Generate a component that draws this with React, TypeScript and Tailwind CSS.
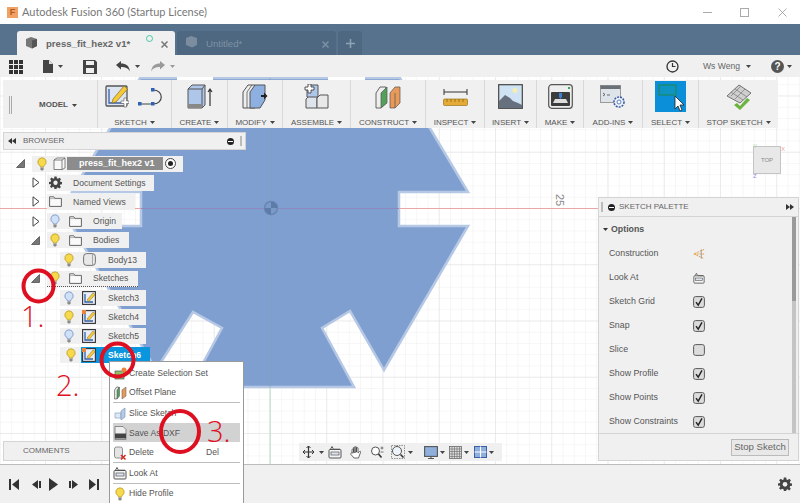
import React from "react";

const Caret = ({ className = "", color = "#444" }: { className?: string; color?: string }) => (
  <svg width="5" height="3" viewBox="0 0 5 3" className={`shrink-0 ${className}`}>
    <path d="M0 0h5L2.500 3z" fill={color} />
  </svg>
);

const Bulb = ({ blue = false }: { blue?: boolean }) => (
  <svg width="10" height="14" viewBox="0 0 10 14">
    <path
      d="M5 .8a4.2 4.2 0 0 0-2.4 7.6c.6.5.8 1 .8 1.6h3.2c0-.6.2-1.1.8-1.6A4.2 4.2 0 0 0 5 .8z"
      fill={blue ? "#cfe0f7" : "#f7d94c"}
      stroke={blue ? "#6f8fc4" : "#b99a2a"}
      strokeWidth=".8"
    />
    <path d="M3.4 10.6h3.2v2.2l-1 .7h-1.2l-1-.7z" fill="#8a8a8a" />
  </svg>
);

const Folder = () => (
  <svg width="13" height="11" viewBox="0 0 13 11">
    <path d="M.6 10.4V.8h4.2l1 1.6h6.6v8z" fill="#fafafa" stroke="#555" strokeWidth=".9" />
    <path d="M.6 2.6h12.8" stroke="#888" strokeWidth=".6" />
  </svg>
);

const Gear = ({ size = 13 }: { size?: number }) => (
  <svg width={size} height={size} viewBox="0 0 24 24">
    <path
      d="M10 1h4l.6 3.2 2 .8L19.4 3l2.8 2.8-2 2.8.8 2L24 11v4l-3.2.6-.8 2 2 2.6-2.8 2.8-2.8-2-2 .8L14 24h-4l-.6-3.2-2-.8-2.8 2-2.8-2.8 2-2.6-.8-2L0 15v-4l3.2-.6.8-2-2-2.8L4.8 2.8 7.6 5l2-.8z"
      fill="#444"
    />
    <circle cx="12" cy="12.5" r="4" fill="#f0f0f0" />
  </svg>
);

const Tri = ({ open }: { open: boolean }) =>
  open ? (
    <svg width="9" height="9" viewBox="0 0 9 9">
      <path d="M.5 8.5L8.5.5v8z" fill="#777" stroke="#444" strokeWidth=".7" />
    </svg>
  ) : (
    <svg width="8" height="11" viewBox="0 0 8 11">
      <path d="M1 .8l6 4.7-6 4.7z" fill="#fff" stroke="#444" strokeWidth="1" />
    </svg>
  );

const SketchIcon = ({ dot = false }: { dot?: boolean }) => (
  <svg width="14" height="14" viewBox="0 0 14 14">
    <rect x=".6" y=".6" width="12.8" height="12.8" fill="#e8eefa" stroke="#333" strokeWidth="1.1" />
    <path d="M3 3v8h8" fill="none" stroke="#3560a8" strokeWidth="1.3" />
    <path d="M5 9l6-7 2 1.6-6 7z" fill="#f4c93a" stroke="#8a6d14" strokeWidth=".5" />
    {dot && <rect x="0" y="0" width="4" height="4" fill="#e8853a" />}
  </svg>
);

const Check = ({ on = true }: { on?: boolean }) => (
  <svg width="12" height="12" viewBox="0 0 12 12">
    <rect x=".6" y=".6" width="10.8" height="10.8" rx="2" fill="#dcdcdc" stroke="#5a5a5a" strokeWidth="1" />
    {on && <path d="M3 6.2l2.2 3L9 2.4" fill="none" stroke="#222" strokeWidth="1.4" />}
  </svg>
);

const LookAt = ({ w = 14 }: { w?: number }) => (
  <svg width={w} height={w} viewBox="0 0 14 14">
    <rect x="1" y="4.5" width="12" height="8.5" rx="1" fill="#f5f5f5" stroke="#555" strokeWidth="1" />
    <rect x="3" y="7" width="8" height="3" fill="#dfe6f2" stroke="#555" strokeWidth=".7" />
    <path d="M2.5 4.2L4 1.5l1.5 2.7M6 4.2h6" fill="none" stroke="#555" strokeWidth="1" />
  </svg>
);

// ribbon drawings
const RibbonSketch = () => (
  <div className="flex items-center gap-[9px]">
    <svg width="24" height="25" viewBox="0 0 24 25">
      <rect x="1" y="2" width="21" height="20" rx="1" fill="#dde5f3" stroke="#555" strokeWidth="1.3" />
      <path d="M4 5v14h15" fill="none" stroke="#3c5fa5" strokeWidth="1.3" />
      <path d="M8 15L19 2l3.5 3L11 18l-4 1z" fill="#f4c93a" stroke="#8a6d14" strokeWidth=".7" />
      <path d="M16 17h3v-3h2.5v3H24v2.5h-2.5V23H19v-3.500h-3z" fill="#fff" stroke="#666" strokeWidth=".7" />
    </svg>
    <svg width="26" height="20" viewBox="0 0 26 20">
      <path d="M2 17h13c11 0 11-14 0-14" fill="none" stroke="#444" strokeWidth="1.2" />
      <rect x="0" y="15" width="3.500" height="3.500" fill="#2f62b5" />
      <rect x="13" y="15" width="3.500" height="3.500" fill="#2f62b5" />
      <rect x="13" y="1" width="3.500" height="3.500" fill="#2f62b5" />
    </svg>
  </div>
);

const RibbonCreate = () => (
  <svg width="26" height="26" viewBox="0 0 26 26">
    <path d="M1 5l4-4h13v20l-3 3H1z" fill="#aec6ea" stroke="#555" strokeWidth="1" />
    <path d="M1 5h14v19M15 5l3-4" fill="none" stroke="#555" strokeWidth="1" />
    <path d="M1 20h14v4H1z" fill="#888" />
    <path d="M23 22V6M21 8l2-3 2 3" fill="none" stroke="#333" strokeWidth="1.2" />
  </svg>
);

const RibbonModify = () => (
  <svg width="26" height="26" viewBox="0 0 26 26">
    <path d="M1 8l5-7h7v23H1z" fill="#eee" stroke="#555" strokeWidth="1" />
    <path d="M8 24V8l5-7h10v15l-5 8z" fill="#8eb0e0" stroke="#555" strokeWidth="1" />
    <path d="M5 24V8l5-7" fill="none" stroke="#555" strokeWidth=".8" />
    <path d="M19 11h3V8.500l3.500 3.500-3.500 3.500V13h-3z" fill="#222" />
  </svg>
);

const RibbonAssemble = () => (
  <svg width="25" height="25" viewBox="0 0 25 25">
    <path d="M2 24v-9l3-3h8v12z" fill="#dfe3ea" stroke="#555" strokeWidth="1" />
    <path d="M13 24V14l3-3h8v13z" fill="#e8e8e8" stroke="#555" strokeWidth="1" />
    <path d="M3 13V4l3-3h8v12z" fill="#aec6ea" stroke="#555" strokeWidth="1" />
    <path d="M1 3h3V0h3v3h3v3H7v3H4V6H1z" fill="#fff" stroke="#444" strokeWidth=".9" />
  </svg>
);

const RibbonConstruct = () => (
  <svg width="27" height="24" viewBox="0 0 27 24">
    <path d="M1 8l4-6h6v16l-5 5H1z" fill="#eee" stroke="#555" strokeWidth=".9" />
    <path d="M6 23V8l6-6v16z" fill="#52a05a" stroke="#555" strokeWidth=".7" />
    <path d="M15 23V8l5-6h5v16l-5 5z" fill="#e89a5a" stroke="#555" strokeWidth=".7" />
    <path d="M20 23V8" stroke="#555" strokeWidth=".7" />
  </svg>
);

const RibbonInspect = () => (
  <svg width="25" height="20" viewBox="0 0 25 20">
    <path d="M1 2v6M24 2v6M1 5h23" fill="none" stroke="#333" strokeWidth="1" />
    <rect x="0.500" y="12" width="24" height="6.500" rx="1" fill="#e6ab36" stroke="#9a7620" strokeWidth=".7" />
    <path d="M4 12v3M8 12v3M12 12v3M16 12v3M20 12v3" stroke="#7a5c14" strokeWidth=".7" />
  </svg>
);

const RibbonInsert = () => (
  <svg width="25" height="25" viewBox="0 0 25 25">
    <rect x=".7" y=".7" width="23.600" height="23.600" fill="#cfe3f4" stroke="#444" strokeWidth="1.2" />
    <circle cx="17" cy="6.500" r="2.500" fill="#f6eeb0" />
    <path d="M1 24V17l6-6 5 3 3 3 5 2 4 2v3z" fill="#66707e" />
  </svg>
);

const RibbonMake = () => (
  <svg width="25" height="25" viewBox="0 0 25 25">
    <rect x=".7" y=".7" width="23.600" height="23.600" rx="3" fill="#eee" stroke="#555" strokeWidth="1.2" />
    <rect x="3" y="8" width="19" height="14" rx="1" fill="#3c3c3c" />
    <path d="M5 19l2-4h11l2 4z" fill="#ddd" />
    <path d="M11 9h3v4l-1.500 2-1.500-2z" fill="#3f7fd6" />
    <rect x="20" y="3" width="2" height="2" fill="#3aa55a" />
  </svg>
);

const RibbonAddins = () => (
  <svg width="26" height="24" viewBox="0 0 26 24">
    <rect x=".5" y=".5" width="20" height="17" fill="#dfe3ea" stroke="#888" strokeWidth=".8" />
    <rect x=".5" y=".5" width="20" height="3.500" fill="#6a7078" />
    <path d="M3 8l2 1.500L3 11M7 10h3" fill="none" stroke="#333" strokeWidth=".7" />
    <circle cx="19" cy="17" r="5" fill="#eef2fa" stroke="#3c5fa5" strokeWidth="1.600" strokeDasharray="2 1" />
    <circle cx="19" cy="17" r="2" fill="#fff" stroke="#3c5fa5" strokeWidth=".8" />
  </svg>
);

const RibbonSelect = () => (
  <div className="flex h-[31px] w-[31px] items-start bg-[#0a8fd8]">
    <svg width="31" height="31" viewBox="0 0 31 31">
      <rect x="4" y="4" width="17" height="10" fill="#1a9e9a" fillOpacity=".35" stroke="#1b8a72" strokeWidth="1.400" />
      <path d="M20 15v13l3-3 2 5 2-1-2-5h4z" fill="#fff" stroke="#222" strokeWidth=".8" />
    </svg>
  </div>
);

const RibbonStop = () => (
  <svg width="26" height="26" viewBox="0 0 26 26">
    <path d="M1 12L13 1l12 8-11 10z" fill="#cfcfcf" stroke="#666" strokeWidth=".9" />
    <path d="M5 8l12 8M9 5l12 8M9 15L19 5M5 12L15 2" stroke="#777" strokeWidth=".7" />
    <path d="M11 19l3 3 7-8 3 2-10 10-6-5z" fill="#6cb33f" />
  </svg>
);

const groups: { label: string; w: string; icon: React.ReactNode }[] = [
  { label: "SKETCH", w: "w-[74px]", icon: <RibbonSketch /> },
  { label: "CREATE", w: "w-[56px]", icon: <RibbonCreate /> },
  { label: "MODIFY", w: "w-[55px]", icon: <RibbonModify /> },
  { label: "ASSEMBLE", w: "w-[68px]", icon: <RibbonAssemble /> },
  { label: "CONSTRUCT", w: "w-[75px]", icon: <RibbonConstruct /> },
  { label: "INSPECT", w: "w-[59px]", icon: <RibbonInspect /> },
  { label: "INSERT", w: "w-[52px]", icon: <RibbonInsert /> },
  { label: "MAKE", w: "w-[47px]", icon: <RibbonMake /> },
  { label: "ADD-INS", w: "w-[59px]", icon: <RibbonAddins /> },
  { label: "SELECT", w: "w-[56px]", icon: <RibbonSelect /> },
  { label: "STOP SKETCH", w: "w-[79px]", icon: <RibbonStop /> },
];

const Ribbon = () => (
  <div className="absolute left-[3px] top-[3px] flex h-[48px] w-[775px] bg-[#f0f0f0] text-[#555]">
    <div className="flex h-full w-[95px] items-center border-r border-[#d8d8d8] pl-[6px] pt-[2px]">
      <div className="h-[18px] w-[3px] border-x border-[#aaa]" />
      <span className="ml-[27px] text-[8px] font-bold">MODEL</span>
      <Caret className="ml-[4px]" />
    </div>
    {groups.map((g, i) => (
      <div
        key={g.label}
        className={`flex h-full flex-col items-center justify-between ${g.w} ${i < groups.length - 1 ? "border-r border-[#d8d8d8]" : ""}`}
      >
        <div className="flex h-[33px] items-center">{g.icon}</div>
        <div className="flex h-[11px] items-center gap-[3px] text-[8px] leading-[10px]">
          {g.label}
          <Caret />
        </div>
      </div>
    ))}
  </div>
);

const Sheet = () => (
  <svg className="absolute inset-0" width="800" height="387" viewBox="0 77 800 387">
    <defs>
      <pattern id="minor" x="270" y="208" width="11.25" height="11.25" patternUnits="userSpaceOnUse">
        <path d="M0 0h11.25M0 0v11.25" stroke="#efefef" strokeWidth="1" fill="none" />
      </pattern>
      <pattern id="major" x="270" y="208" width="56.25" height="56.25" patternUnits="userSpaceOnUse">
        <path d="M0 0h56.25M0 0v56.25" stroke="#e0e0e0" strokeWidth="1" fill="none" />
      </pattern>
    </defs>
    <rect x="0" y="77" width="800" height="387" fill="#fff" />
    <rect x="0" y="77" width="800" height="387" fill="url(#minor)" />
    <rect x="0" y="77" width="800" height="387" fill="url(#major)" />
    <path d="M270 77v387" stroke="#b9dcc4" strokeWidth="1" />
    <polygon
      points="140,78 400,78 468,192 399,192 399,226 468,226 384,370 350,311 322,328 354,387 190,387 222,328 193,312 156,370 72,226 141,226 141,192 72,192"
      fill="#7f9fd0"
      stroke="#b6c8e4"
      strokeWidth="2.500"
    />
    <rect x="177" y="77" width="36" height="4" fill="#fff" />
    <rect x="328" y="77" width="37" height="4" fill="#fff" />
    <path d="M0 208.500h141M399 208.500h200" stroke="#eba6a6" strokeWidth="1.200" />
    <path d="M141 208.500h258" stroke="#8d88bd" strokeWidth="1" />
    <path d="M270 78v309" stroke="#7ba3b8" strokeWidth=".8" />
    <circle cx="271" cy="208" r="6.500" fill="#7c9ac8" stroke="#6786b4" strokeWidth="1.500" />
    <path d="M271 208V201.500A6.500 6.500 0 0 1 277.500 208zM271 208v6.500a6.500 6.500 0 0 1-6.500-6.500z" fill="#5f7ca8" />
  </svg>
);

const Strip = ({ w, children, className = "" }: { w: string; children: React.ReactNode; className?: string }) => (
  <div className={`flex h-4 items-center bg-[#f0f0f0] ${w} ${className}`}>{children}</div>
);

const Label = ({ children, ml }: { children: React.ReactNode; ml: string }) => (
  <div className={`whitespace-nowrap text-[8.6px] leading-3 text-[#555] ${ml}`}>{children}</div>
);

const Slot = ({ w, open }: { w: string; open?: boolean }) => (
  <div className={`flex h-full shrink-0 items-center justify-end pr-[7px] ${w}`}>
    {open !== undefined && <Tri open={open} />}
  </div>
);

const Row = ({ children }: { children: React.ReactNode }) => (
  <div className="flex h-[19.2px] items-center">{children}</div>
);

const Box = ({ w, children }: { w: string; children: React.ReactNode }) => (
  <div className={`flex shrink-0 justify-center ${w}`}>{children}</div>
);

const FolderRow = ({ label, w, open, blue, dotted }: { label: string; w: string; open: boolean; blue?: boolean; dotted?: boolean }) => (
  <Row>
    <Slot w="w-[47px]" open={open} />
    <Strip w={w} className={dotted ? "border-b border-dotted border-[#555]" : ""}>
      <Box w="w-[16px]"><Bulb blue={blue} /></Box>
      <Box w="w-[24px]"><Folder /></Box>
      <Label ml="ml-[6px]">{label}</Label>
    </Strip>
  </Row>
);

const ChildRow = ({ label, blue, icon }: { label: string; blue?: boolean; icon: React.ReactNode }) => (
  <Row>
    <Slot w="w-[60px]" />
    <Strip w="w-[86px]">
      <Box w="w-[18px]"><Bulb blue={blue} /></Box>
      <Box w="w-[22px]">{icon}</Box>
      <Label ml="ml-[8px]">{label}</Label>
    </Strip>
  </Row>
);

const Browser = () => (
  <div className="absolute left-0 top-[55px] w-[246px]">
    <div className="ml-[3px] flex h-[18px] items-center border border-[#d4d4d4] bg-[#f0f0f0] text-[8px] text-[#666]">
      <svg width="8" height="6" viewBox="0 0 8 6" className="ml-[4px]">
        <path d="M4 0v6L0 3zM8 0v6L4 3z" fill="#333" />
      </svg>
      <span className="ml-[7px]">BROWSER</span>
      <div className="ml-auto flex h-[7px] w-[7px] items-center justify-center rounded-full bg-[#222]">
        <div className="h-px w-[5px] bg-white" />
      </div>
      <div className="ml-[6px] mr-[3px] h-[10px] w-[2px] border-x border-[#bbb]" />
    </div>
    <div className="mt-1">
      <Row>
        <Slot w="w-[32px]" open />
        <Strip w="w-[151px]">
          <Box w="w-[20px]"><Bulb /></Box>
          <div className="flex h-[13px] w-[111px] items-center bg-[#8c8c8c]">
            <svg width="15" height="13" viewBox="0 0 15 13" className="bg-[#eee]">
              <path d="M2 3l3-2h8v10l-3 1.500H2z" fill="#f8f8f8" stroke="#666" strokeWidth=".8" />
              <path d="M10 3v9.500M2 3h8l3-2" fill="none" stroke="#666" strokeWidth=".8" />
            </svg>
            <span className="ml-[12px] whitespace-nowrap text-[9px] font-bold text-white">press_fit_hex2 v1</span>
          </div>
          <div className="ml-[2px] flex h-[11px] w-[11px] items-center justify-center rounded-full border border-[#444] bg-white">
            <div className="h-[5px] w-[5px] rounded-full bg-[#222]" />
          </div>
        </Strip>
      </Row>
      <Row>
        <Slot w="w-[47px]" open={false} />
        <Strip w="w-[107px]">
          <Box w="w-[16px]"><Gear /></Box>
          <Label ml="ml-[10px]">Document Settings</Label>
        </Strip>
      </Row>
      <Row>
        <Slot w="w-[47px]" open={false} />
        <Strip w="w-[88px]">
          <Box w="w-[16px]"><Folder /></Box>
          <Label ml="ml-[10px]">Named Views</Label>
        </Strip>
      </Row>
      <FolderRow label="Origin" w="w-[75px]" open={false} blue />
      <FolderRow label="Bodies" w="w-[82px]" open />
      <ChildRow
        label="Body13"
        icon={
          <svg width="13" height="13" viewBox="0 0 13 13">
            <rect x=".6" y=".6" width="11.800" height="11.800" rx="3" fill="#e8e8e8" stroke="#666" strokeWidth=".9" />
            <path d="M9.500 1v11" stroke="#888" strokeWidth=".7" />
          </svg>
        }
      />
      <FolderRow label="Sketches" w="w-[91px]" open dotted />
      <ChildRow label="Sketch3" blue icon={<SketchIcon />} />
      <ChildRow label="Sketch4" icon={<SketchIcon dot />} />
      <ChildRow label="Sketch5" blue icon={<SketchIcon />} />
      <Row>
        <Slot w="w-[60px]" />
        <Strip w="w-[90px]">
          <Box w="w-[21px]"><Bulb /></Box>
          <div className="flex h-4 flex-1 items-center bg-[#0a96de]">
            <Box w="w-[16px]"><SketchIcon dot /></Box>
            <span className="ml-[11px] whitespace-nowrap text-[8.6px] font-bold text-white">Sketch6</span>
          </div>
        </Strip>
      </Row>
    </div>
  </div>
);

const MenuItem = ({ label, icon, hl, extra }: { label: string; icon: React.ReactNode; hl?: boolean; extra?: string }) => (
  <div className={`mx-[3px] flex h-[19.6px] items-center pt-[1px] text-[8.6px] text-[#555] ${hl ? "bg-[#d2d2d2]" : ""}`}>
    <Box w="w-[14px]">{icon}</Box>
    <span className="ml-[2px] whitespace-nowrap">{label}</span>
    {extra && <span className="ml-auto mr-[21px]">{extra}</span>}
  </div>
);

const Sep = () => <div className="mx-[3px] h-px bg-[#bdbdbd]" />;

const ContextMenu = () => (
  <div className="absolute left-[109px] top-[361px] h-[160px] w-[135px] border border-[#999] bg-white pt-px">
    <MenuItem
      label="Create Selection Set"
      icon={
        <svg width="13" height="13" viewBox="0 0 13 13">
          <rect x="1" y="4" width="9" height="8" fill="#8fbf6a" stroke="#555" strokeWidth=".7" />
          <circle cx="10" cy="3" r="2.500" fill="#e8853a" />
        </svg>
      }
    />
    <MenuItem
      label="Offset Plane"
      icon={
        <svg width="13" height="14" viewBox="0 0 13 14">
          <path d="M.6 4l2-3h2v9l-2 3h-2z" fill="#eee" stroke="#555" strokeWidth=".7" />
          <path d="M3 13V4l2.500-3v9z" fill="#52a05a" stroke="#555" strokeWidth=".5" />
          <path d="M8 13V4l4-3v9z" fill="#e89a5a" stroke="#555" strokeWidth=".5" />
        </svg>
      }
    />
    <Sep />
    <MenuItem
      label="Slice Sketch"
      icon={
        <svg width="13" height="13" viewBox="0 0 13 13">
          <path d="M1 6h6v5H1z" fill="#dfe8f5" stroke="#8aa2c4" strokeWidth=".7" />
          <path d="M7 4l4-3v9l-4 3z" fill="#b7cbe6" stroke="#7d96ba" strokeWidth=".7" />
        </svg>
      }
    />
    <MenuItem
      hl
      label="Save As DXF"
      icon={
        <svg width="13" height="14" viewBox="0 0 13 14">
          <path d="M1 .5h8l3 3v10H1z" fill="#eee" stroke="#666" strokeWidth=".7" />
          <rect x="1" y="7.500" width="11" height="5" fill="#444" />
        </svg>
      }
    />
    <MenuItem
      label="Delete"
      extra="Del"
      icon={
        <svg width="14" height="14" viewBox="0 0 14 14">
          <rect x="1.500" y="1" width="8" height="11" rx="2" fill="#e4e4e4" stroke="#777" strokeWidth=".8" />
          <path d="M8 9l4.500 4.500M12.500 9L8 13.500" stroke="#d02a1e" strokeWidth="1.500" />
        </svg>
      }
    />
    <Sep />
    <MenuItem label="Look At" icon={<LookAt />} />
    <Sep />
    <MenuItem label="Hide Profile" icon={<Bulb />} />
  </div>
);

const PaletteRow = ({ label, children }: { label: string; children: React.ReactNode }) => (
  <div className="flex h-6 items-center pl-[10px] pt-[1px] text-[8.8px] text-[#555]">
    <span className="w-[84px] whitespace-nowrap">{label}</span>
    <Box w="w-[12px]">{children}</Box>
  </div>
);

const Palette = () => (
  <div className="absolute left-[598px] top-[120px] h-[264px] w-[201px] border border-[#d4d4d4] bg-[#f0f0f0]">
    <div className="flex h-[19px] items-center border-b border-[#d4d4d4] text-[8px] text-[#666]">
      <div className="ml-[2px] h-[10px] w-[2px] border-x border-[#bbb]" />
      <div className="ml-[5px] flex h-[7px] w-[7px] items-center justify-center rounded-full bg-[#222]">
        <div className="h-px w-[5px] bg-white" />
      </div>
      <span className="ml-[4px]">SKETCH PALETTE</span>
      <svg width="8" height="6" viewBox="0 0 8 6" className="ml-auto mr-[4px]">
        <path d="M0 0v6l4-3zM4 0v6l4-3z" fill="#333" />
      </svg>
    </div>
    <div className="relative h-[216px]">
      <div className="absolute right-[2px] top-0 h-full w-[4px] bg-[#c4c4c4]">
        <div className="h-[84px] w-full bg-[#9a9a9a]" />
      </div>
      <div className="flex h-6 items-center gap-[2px] pl-[4px] pt-[1px] text-[8.8px] font-bold text-[#555]">
        <Caret className="mr-[1px]" color="#333" />
        Options
      </div>
      <PaletteRow label="Construction">
        <svg width="13" height="12" viewBox="0 0 13 12">
          <path d="M12 1L1 6l11 5M1 6h11" fill="none" stroke="#e39a3c" strokeWidth="1" strokeDasharray="2 1" />
          <path d="M9 1v10" stroke="#777" strokeWidth=".7" />
        </svg>
      </PaletteRow>
      <PaletteRow label="Look At"><LookAt /></PaletteRow>
      <PaletteRow label="Sketch Grid"><Check /></PaletteRow>
      <PaletteRow label="Snap"><Check /></PaletteRow>
      <PaletteRow label="Slice"><Check on={false} /></PaletteRow>
      <PaletteRow label="Show Profile"><Check /></PaletteRow>
      <PaletteRow label="Show Points"><Check /></PaletteRow>
      <PaletteRow label="Show Constraints"><Check /></PaletteRow>
    </div>
    <div className="flex h-[27px] items-center justify-end border-t border-[#d4d4d4] pr-[9px]">
      <div className="flex h-[17px] w-[58px] items-center justify-center border border-[#bbb] bg-[#e8e8e8] text-[9.6px] text-[#666]">
        Stop Sketch
      </div>
    </div>
  </div>
);

const NavBar = () => (
  <div className="absolute left-[299px] top-[366px] flex h-[18px] w-[203px] items-center bg-[#f0f0f0] pl-[3px]">
    <svg width="13" height="14" viewBox="0 0 13 14">
      <path d="M6.500 1v12M1 7h11" stroke="#333" strokeWidth="1.200" />
      <path d="M4.500 3l2-2 2 2M4.500 11l2 2 2-2M3 5l-2 2 2 2M10 5l2 2-2 2" fill="none" stroke="#333" strokeWidth="1" />
    </svg>
    <Caret className="ml-[4px]" />
    <div className="ml-[4px] flex"><LookAt w={14} /></div>
    <svg width="14" height="14" viewBox="0 0 14 14" className="ml-[7px]">
      <path d="M3 8V4.500a1 1 0 0 1 1.500 0V7M4.500 7V2.500a1 1 0 0 1 1.500 0V7M6 7V2a1 1 0 0 1 1.500 0V7M7.500 7V3a1 1 0 0 1 1.500 0v5l1.500-1.500c1-.5 1.500.3 1 1L9.500 13H5L2 9.500C1.500 8.500 2.500 7.500 3 8z" fill="#fff" stroke="#444" strokeWidth=".8" />
    </svg>
    <svg width="14" height="14" viewBox="0 0 14 14" className="ml-[7px]">
      <circle cx="5.500" cy="6" r="4" fill="#fff" stroke="#555" strokeWidth="1" />
      <path d="M8.500 9l3 3.500" stroke="#333" strokeWidth="1.600" />
      <path d="M10.500 3h3M12 1.500v3M10.500 7h3" stroke="#555" strokeWidth=".8" />
    </svg>
    <svg width="14" height="14" viewBox="0 0 14 14" className="ml-[7px]">
      <rect x=".5" y=".5" width="13" height="13" fill="none" stroke="#666" strokeWidth=".7" strokeDasharray="1.500 1" />
      <circle cx="6" cy="6" r="4.500" fill="#eef4fb" stroke="#555" strokeWidth="1" />
      <path d="M9.500 9.500l3 3" stroke="#333" strokeWidth="1.600" />
    </svg>
    <Caret className="ml-[3px]" />
    <svg width="14" height="13" viewBox="0 0 14 13" className="ml-[11px]">
      <rect x=".6" y=".6" width="12.800" height="9.800" fill="#8fb0dc" stroke="#555" strokeWidth="1.100" />
      <path d="M4 12.500h6M7 10.500v2" stroke="#555" strokeWidth="1.100" />
    </svg>
    <Caret className="ml-[2px]" />
    <svg width="13" height="13" viewBox="0 0 13 13" className="ml-[4px]">
      <rect x=".5" y=".5" width="12" height="12" fill="#ddd" stroke="#666" strokeWidth=".8" />
      <path d="M3 1v11M5.500 1v11M8 1v11M10.500 1v11M1 3h11M1 5.500h11M1 8h11M1 10.500h11" stroke="#666" strokeWidth=".6" />
    </svg>
    <Caret className="ml-[2px]" />
    <svg width="13" height="12" viewBox="0 0 13 12" className="ml-[5px]">
      <rect x=".5" y=".5" width="12" height="11" fill="#8fb0dc" stroke="#3c5fa5" strokeWidth="1" />
      <path d="M6.500 .5v11M.5 6h12" stroke="#fff" strokeWidth="1" />
    </svg>
    <Caret className="ml-[2px]" />
  </div>
);

const ViewCube = () => (
  <div className="absolute left-[753px] top-[69px] flex h-[28px] w-[28px] items-center justify-center border border-[#c4c4c4] bg-[#e8e8e8] text-[6px] text-[#888]">
    TOP
    <span className="absolute -right-[5px] -top-[2px] text-[6px] text-[#f0a0a0]">X</span>
    <span className="absolute -left-[1px] -top-[5px] text-[6px] text-[#9fdc9f]">Y</span>
    <span className="absolute -bottom-[8px] -left-[1px] text-[6px] text-[#8f8fe8]">Z</span>
  </div>
);

const Annotations = () => (
  <>
    <svg className="pointer-events-none absolute left-0 top-0" width="800" height="503" viewBox="0 0 800 503">
      <g fill="none" stroke="#dd0f20" strokeWidth="4">
        <ellipse cx="38.500" cy="286" rx="15" ry="15.500" />
        <ellipse cx="117.500" cy="360" rx="16" ry="16.500" />
        <ellipse cx="180" cy="431.500" rx="19" ry="20.500" />
      </g>
    </svg>
    <span className="absolute left-[21px] top-[304px] font-['Open_Sans',sans-serif] text-[29px] font-light leading-[24px] text-[#e0101f]">1.</span>
    <span className="absolute left-[56px] top-[373px] font-['Open_Sans',sans-serif] text-[29px] font-light leading-[24px] text-[#e0101f]">2.</span>
    <span className="absolute left-[207px] top-[419px] font-['Open_Sans',sans-serif] text-[29px] font-light leading-[24px] text-[#e0101f]">3.</span>
  </>
);

export default function App() {
  return (
    <div className="relative flex h-[503px] w-[800px] flex-col overflow-hidden bg-white font-['Liberation_Sans',Arial,sans-serif]">
      {/* title bar */}
      <div className="flex h-6 shrink-0 items-center pl-[7px] pr-3">
        <div className="flex h-[11px] w-[11px] items-center justify-center bg-[#f0a264] text-[9px] font-bold leading-none text-[#b55a1e]">F</div>
        <span className="ml-[4px] font-['Lato',sans-serif] text-[11px] text-[#777]">Autodesk Fusion 360 (Startup License)</span>
        <div className="ml-auto flex items-center">
          <div className="h-px w-[9px] bg-[#aaa]" />
          <div className="ml-[28px] h-[9px] w-[9px] border border-[#aaa]" />
          <svg width="9" height="9" viewBox="0 0 9 9" className="ml-[29px] mr-[1px]">
            <path d="M.5 .5l8 8M8.500 .5l-8 8" stroke="#999" strokeWidth=".8" />
          </svg>
        </div>
      </div>

      {/* tabs */}
      <div className="flex h-[31px] shrink-0 items-end gap-[2px] bg-[#57728c] pl-[17px]">
        <div className="relative flex h-6 w-[158px] items-center rounded-t-[3px] bg-[#f0f0f0] pl-[8px] pt-[2px]">
          <svg width="13" height="13" viewBox="0 0 13 13" className="mb-[3px]">
            <path d="M1 3l5-2 6 2v7l-5 2.500L1 10z" fill="#777" />
            <path d="M7 4.500L12 3v7l-5 2.500z" fill="#555" />
          </svg>
          <span className="ml-[8px] text-[9.6px] font-bold text-[#666]">press_fit_hex2 v1*</span>
          <div className="absolute left-[129px] top-[4px] h-[7px] w-[7px] rounded-full border border-[#45c9a8]" />
          <svg width="7" height="7" viewBox="0 0 7 7" className="absolute left-[144px] top-[10px]">
            <path d="M.5 .5l6 6M6.500 .5l-6 6" stroke="#777" strokeWidth="1.500" />
          </svg>
        </div>
        <div className="relative flex h-6 w-[159px] items-center rounded-t-[3px] bg-[#4d6880] pl-[8px] pt-[2px]">
          <svg width="13" height="13" viewBox="0 0 13 13" className="mb-[5px]">
            <path d="M1 3l5-2 6 2v7l-5 2.500L1 10z" fill="#7b8d9e" />
          </svg>
          <span className="ml-[8px] text-[9.6px] text-[#7f92a4]">Untitled*</span>
          <svg width="7" height="7" viewBox="0 0 7 7" className="absolute left-[145px] top-[10px]">
            <path d="M.5 .5l6 6M6.500 .5l-6 6" stroke="#7f92a4" strokeWidth="1.500" />
          </svg>
        </div>
        <div className="flex h-6 w-[24px] items-center justify-center rounded-t-[3px] bg-[#4d6880]">
          <svg width="9" height="9" viewBox="0 0 9 9">
            <path d="M4.500 0v9M0 4.500h9" stroke="#8fa2b3" strokeWidth="1.500" />
          </svg>
        </div>
      </div>

      {/* quick access */}
      <div className="flex h-[22px] shrink-0 items-center bg-[#f0f0f0] pl-[9px] pr-[8px] pt-[1px]">
        <svg width="14" height="14" viewBox="0 0 14 14">
          <path d="M0 0h4v4H0zM5 0h4v4H5zM10 0h4v4h-4zM0 5h4v4H0zM5 5h4v4H5zM10 5h4v4h-4zM0 10h4v4H0zM5 10h4v4H5zM10 10h4v4h-4z" fill="#333" />
        </svg>
        <svg width="10" height="13" viewBox="0 0 10 13" className="ml-[20px]">
          <path d="M0 0h6l4 4v9H0z" fill="#444" />
          <path d="M6 0v4h4" fill="#ddd" />
        </svg>
        <Caret className="ml-[5px]" />
        <svg width="14" height="14" viewBox="0 0 14 14" className="ml-[20px]">
          <path d="M0 0h12l2 2v12H0z" fill="#444" />
          <rect x="3" y="1" width="8" height="4" fill="#f0f0f0" />
          <rect x="3" y="8" width="8" height="5" fill="#f0f0f0" />
        </svg>
        <svg width="14" height="11" viewBox="0 0 14 11" className="ml-[19px]">
          <path d="M0 4l5-4v2.500c5 0 8 2 9 8C12 7 9 6 5 6v2.500z" fill="#444" />
        </svg>
        <Caret className="ml-[5px]" />
        <svg width="14" height="11" viewBox="0 0 14 11" className="ml-[11px]">
          <path d="M14 4L9 0v2.500c-5 0-8 2-9 8C2 7 5 6 9 6v2.500z" fill="#9a9a9a" />
        </svg>
        <Caret className="ml-[5px]" color="#9a9a9a" />
        <svg width="13" height="13" viewBox="0 0 13 13" className="ml-auto">
          <circle cx="6.500" cy="6.500" r="5.500" fill="none" stroke="#333" strokeWidth="1.300" />
          <path d="M6.500 3v3.500H9.500" fill="none" stroke="#333" strokeWidth="1.200" />
        </svg>
        <span className="ml-[24px] text-[8.6px] text-[#666]">Ws Weng</span>
        <Caret className="ml-[6px]" />
        <div className="ml-[20px] flex h-[13px] w-[13px] items-center justify-center rounded-full bg-[#555] text-[10px] font-bold leading-none text-white">?</div>
        <Caret className="ml-[3px]" />
      </div>

      {/* sketch area */}
      <div className="relative flex-1">
        <Sheet />
        <Ribbon />
        <Browser />
        <span className="absolute left-[554px] top-[116px] rotate-90 text-[11px] leading-[14px] text-[#888]">25</span>
        <ViewCube />
        <Palette />
        <div className="absolute left-[3px] top-[364px] flex h-[20px] w-[240px] items-center border border-[#d4d4d4] bg-[#f0f0f0] pl-[19px] text-[8px] text-[#666]">
          COMMENTS
        </div>
        <NavBar />
      </div>

      {/* timeline */}
      <div className="flex h-[39px] shrink-0 items-center border-t border-[#bcbcbc] bg-[#f0f0f0] pl-[9px] pr-[8px]">
        <svg width="90" height="13" viewBox="0 0 90 13">
          <path d="M0 1h2v11H0zM10 1v11L3 6.500z" fill="#333" />
          <path d="M29 2v9l-6-4.500zM30 3h2v7h-2z" fill="#333" />
          <path d="M40 0v13l9-6.500z" fill="#333" />
          <path d="M60 3h2v7h-2zM63 2v9l6-4.500z" fill="#333" />
          <path d="M80 1v11l7-5.500zM88 1h2v11h-2z" fill="#333" />
        </svg>
        <div className="ml-auto flex"><Gear size={14} /></div>
      </div>

      <ContextMenu />
      <Annotations />
    </div>
  );
}
